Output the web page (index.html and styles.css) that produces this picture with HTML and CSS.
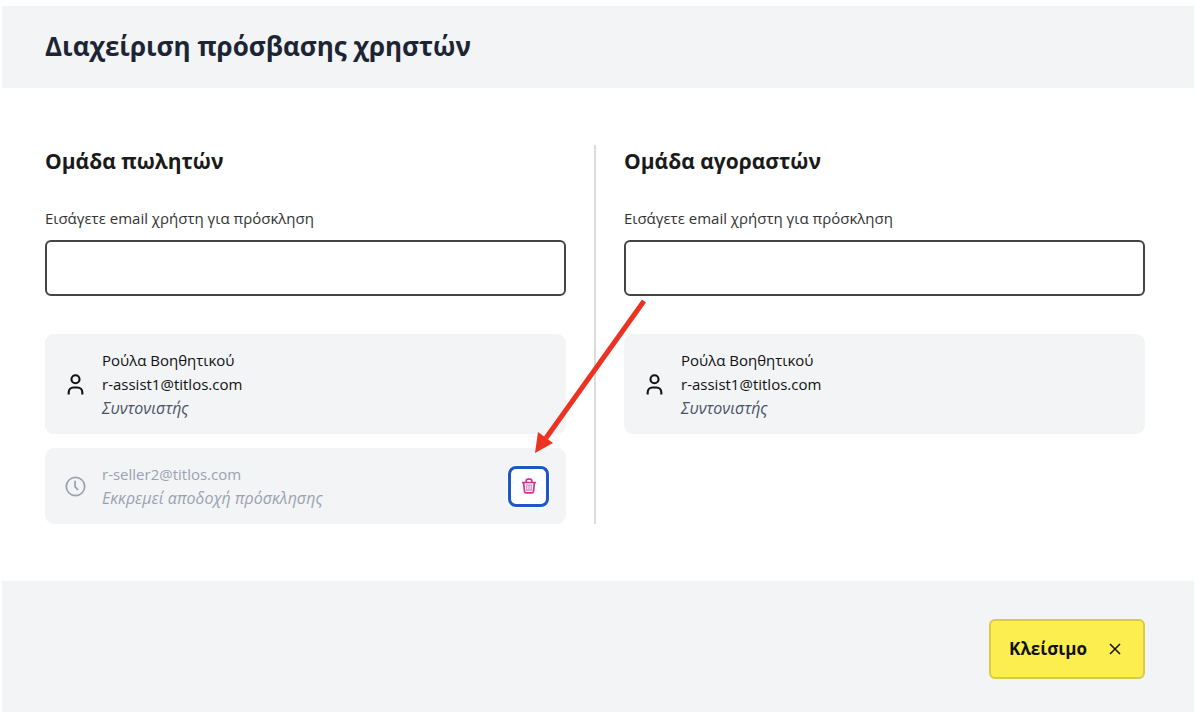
FILE: index.html
```
<!DOCTYPE html>
<html lang="el">

<head>
  <meta charset="UTF-8">
  <meta name="viewport" content="width=device-width, initial-scale=1.0">
  <title>Διαχείριση πρόσβασης χρηστών</title>
  <link rel="stylesheet" href="styles.css">
</head>

<body>
  <div class="dialog" role="dialog" aria-labelledby="dialog-title">
    <header class="dialog-header">
      <h1 id="dialog-title">Διαχείριση πρόσβασης χρηστών</h1>
    </header>

    <main class="groups">
      <section class="group">
        <h2>Ομάδα πωλητών</h2>
        <label for="seller-email">Εισάγετε email χρήστη για πρόσκληση</label>
        <input id="seller-email" class="email" type="email">

        <ul class="users">
          <li class="user">
            <svg class="user-icon" viewBox="0 0 24 24" aria-hidden="true">
              <circle cx="12" cy="6" r="4.6" />
              <path d="M4.2 23.5V21c0-3.6 2.6-5.6 5.6-5.6h4.4c3 0 5.6 2 5.6 5.6v2.5" />
            </svg>
            <div class="user-info">
              <p>Ρούλα Βοηθητικού</p>
              <p>r-assist1@titlos.com</p>
              <p class="role">Συντονιστής</p>
            </div>
          </li>
          <li class="user pending">
            <svg class="user-icon" viewBox="0 0 24 24" aria-hidden="true">
              <circle cx="12" cy="12" r="10.5" />
              <path d="M11.5 5.5v7L15 16" />
            </svg>
            <div class="user-info">
              <p>r-seller2@titlos.com</p>
              <p class="role">Εκκρεμεί αποδοχή πρόσκλησης</p>
            </div>
            <div class="remove-wrap">
              <button class="remove" type="button" aria-label="Διαγραφή">
                <svg viewBox="0 0 16 16" aria-hidden="true">
                  <path d="M1 4.5h14M5.2 4.3V3q0-1.8 1.8-1.8h2q1.8 0 1.8 1.8v1.3" />
                  <path d="M2.6 4.8l.9 8.6q.1 1.4 1.5 1.4h6q1.4 0 1.5-1.4l.9-8.6" />
                  <path class="bin-lines" d="M5.8 7v5.2M8 7v5.2M10.2 7v5.2M4.8 7h6.4M4.8 12.2h6.4" />
                </svg>
              </button>
              <!-- pointer to the remove button -->
              <svg class="arrow" viewBox="0 0 114 156" aria-hidden="true">
                <path class="arrow-line" d="M110 2L12 139" />
                <path class="arrow-head" d="M1 154L4 133L19 144Z" />
              </svg>
            </div>
          </li>
        </ul>
      </section>

      <div class="divider"></div>

      <section class="group">
        <h2>Ομάδα αγοραστών</h2>
        <label for="buyer-email">Εισάγετε email χρήστη για πρόσκληση</label>
        <input id="buyer-email" class="email" type="email">

        <ul class="users">
          <li class="user">
            <svg class="user-icon" viewBox="0 0 24 24" aria-hidden="true">
              <circle cx="12" cy="6" r="4.6" />
              <path d="M4.2 23.5V21c0-3.6 2.6-5.6 5.6-5.6h4.4c3 0 5.6 2 5.6 5.6v2.5" />
            </svg>
            <div class="user-info">
              <p>Ρούλα Βοηθητικού</p>
              <p>r-assist1@titlos.com</p>
              <p class="role">Συντονιστής</p>
            </div>
          </li>
        </ul>
      </section>
    </main>

    <footer class="dialog-footer">
      <button class="close" type="button">
        Κλείσιμο
        <svg viewBox="0 0 12 12" aria-hidden="true">
          <path d="M1 1l10 10M11 1L1 11" />
        </svg>
      </button>
    </footer>
  </div>
</body>

</html>
```

FILE: styles.css
```
* {
  box-sizing: border-box;
  margin: 0;
  padding: 0;
}

body {
  min-height: 100vh;
  display: flex;
  padding: 6px 2px 0;
  background-color: #fff;
  color: #111;
  font-family: "Open Sans", "Noto Sans", sans-serif;
  font-size: 15px;
  line-height: 24px;
}

.dialog {
  flex: 1;
  display: flex;
  flex-direction: column;
}

.dialog-header {
  padding: 22px 43px 24px;
  background-color: #f2f4f6;
}

h1 {
  color: #1d2535;
  font-size: 26px;
  line-height: 36px;
}

.groups {
  display: grid;
  grid-template-columns: 1fr 2px 1fr;
  gap: 28px;
  padding: 57px 49px 57px 43px;
}

.divider {
  background-color: #dbdbe2;
}

h2 {
  margin-bottom: 29px;
  color: #1a1a1a;
  font-size: 21px;
  line-height: 32px;
}

label {
  display: block;
  margin-bottom: 10px;
  color: #333;
}

.email {
  display: block;
  width: 100%;
  height: 56px;
  padding: 0 16px;
  border: 2px solid #444;
  border-radius: 6px;
  background-color: #fff;
  font: inherit;
}

.users {
  display: flex;
  flex-direction: column;
  gap: 14px;
  margin-top: 38px;
  list-style: none;
}

.user {
  display: flex;
  align-items: center;
  gap: 16px;
  padding: 14px 17px 14px 20px;
  border-radius: 9px;
  background-color: #f2f4f6;
}

.user-icon {
  width: 21px;
  height: 21px;
  fill: none;
  stroke: #111;
  stroke-width: 2.4;
}

.user-info {
  flex: 1;
}

.role {
  color: #4b5263;
  font-size: 16px;
  font-style: italic;
}

.pending,
.pending .role {
  color: #9ca1b0;
}

.pending .user-icon {
  stroke: #9ca1b0;
  stroke-width: 2;
}

.remove-wrap {
  position: relative;
}

.remove {
  display: flex;
  align-items: center;
  justify-content: center;
  width: 41px;
  height: 41px;
  border: 3px solid #1d56c5;
  border-radius: 8px;
  background-color: #fff;
  box-shadow: 0 0 0 1px #fff;
}

.remove svg {
  width: 16px;
  height: 16px;
  fill: none;
  stroke: #dc2f92;
  stroke-width: 1.7;
}

.remove .bin-lines {
  stroke-width: 1.2;
  opacity: 0.6;
}

.arrow {
  position: absolute;
  left: 26px;
  bottom: 52px;
  width: 114px;
  height: 156px;
  pointer-events: none;
}

.arrow-line {
  stroke: #ec3323;
  stroke-width: 5;
}

.arrow-head {
  fill: #ec3323;
}

.dialog-footer {
  flex: 1;
  display: flex;
  align-items: flex-start;
  justify-content: flex-end;
  padding: 38px 49px 33px;
  background-color: #f2f4f6;
}

.close {
  display: flex;
  align-items: center;
  gap: 22px;
  height: 60px;
  padding: 0 22px 0 18px;
  border: 2px solid #d8cb4c;
  border-radius: 6px;
  background-color: #fdee4f;
  color: #111;
  font: inherit;
  font-size: 17px;
  font-weight: 700;
}

.close svg {
  width: 12px;
  height: 12px;
  stroke: #111;
  stroke-width: 1.5;
}
```
